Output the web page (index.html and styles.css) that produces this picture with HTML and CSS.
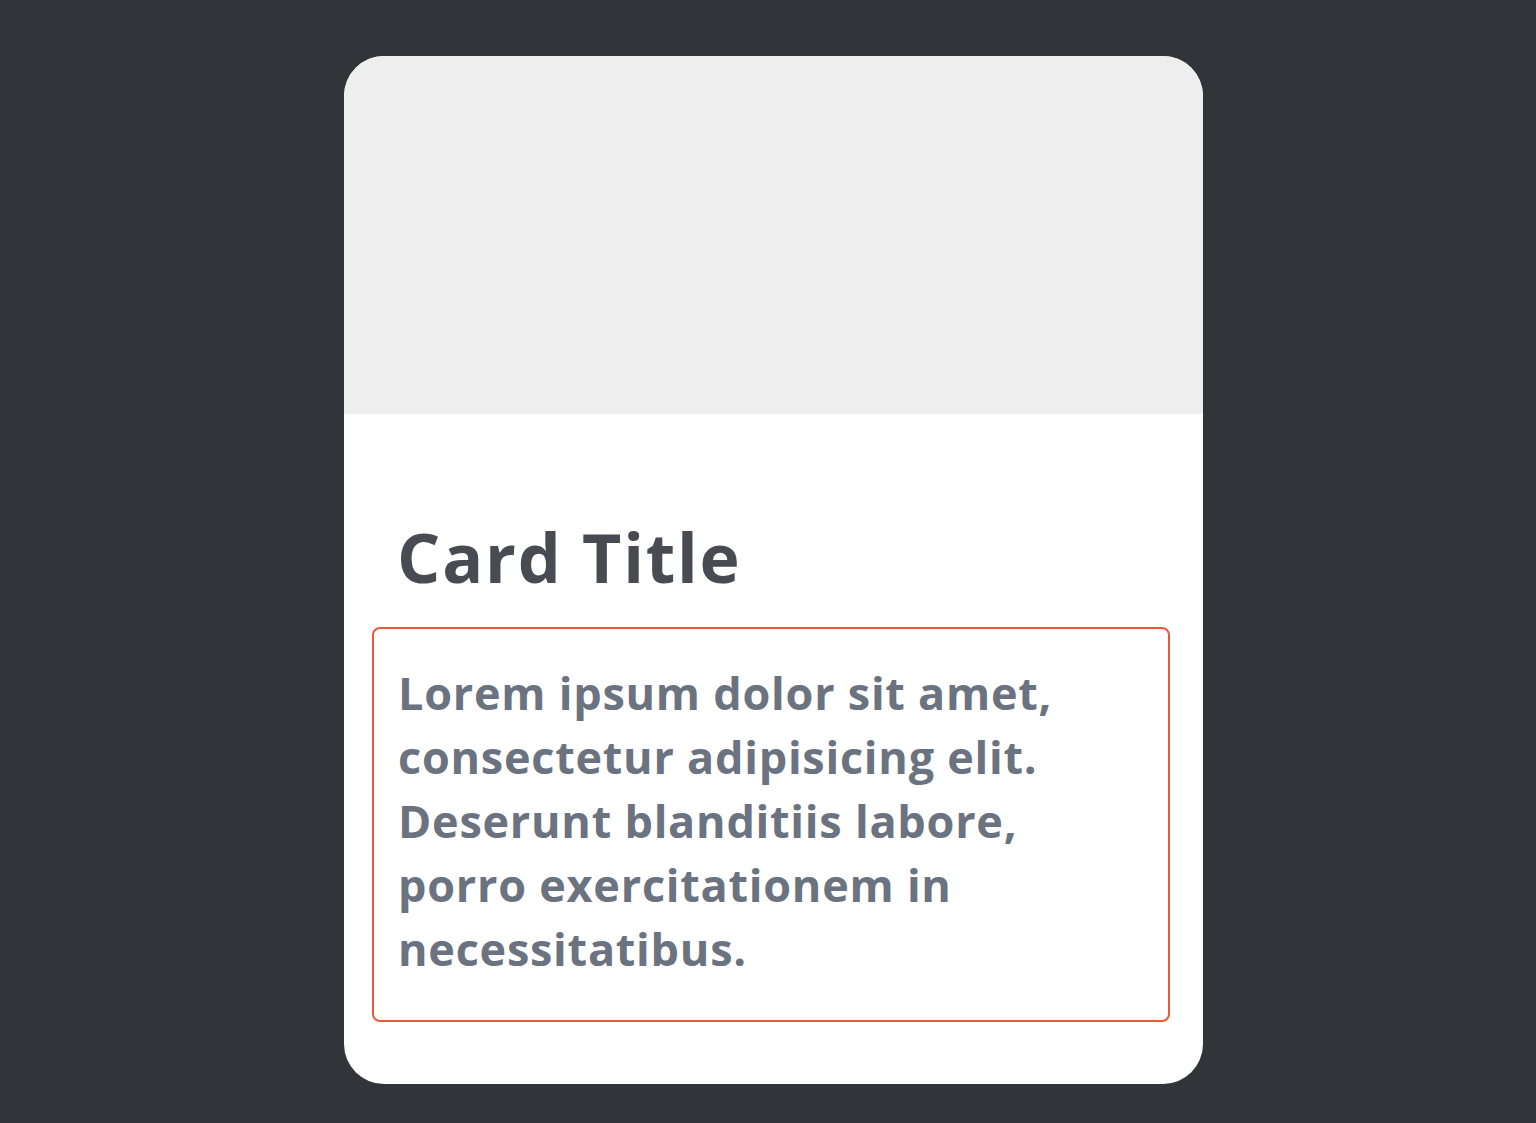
FILE: index.html
```html
<!DOCTYPE html>
<html lang="en">
<head>
<meta charset="utf-8">
<title>Card</title>
<link rel="stylesheet" href="styles.css">
</head>
<body>
  <div class="card">
    <div class="card-image"></div>
    <div class="card-body">
      <h2 class="card-title">Card Title</h2>
      <p class="card-text">Lorem ipsum dolor sit amet, consectetur adipisicing elit. Deserunt blanditiis labore, porro exercitationem in necessitatibus.</p>
    </div>
  </div>
</body>
</html>
```

FILE: styles.css
```css
html, body {
  margin: 0;
  padding: 0;
}
body {
  background: #313539;
  font-family: "Open Sans", "Noto Sans", sans-serif;
  min-height: 1123px;
  padding-top: 56px;
  box-sizing: border-box;
}
.card {
  width: 859px;
  margin-left: 344px;
  background: #ffffff;
  border-radius: 40px;
  overflow: hidden;
}
.card-image {
  height: 358px;
  background: #eeeeee;
}
.card-body {
  padding: 103px 33px 62px 28px;
}
.card-title {
  margin: 0 0 30px 25px;
  font-size: 68px;
  line-height: 80px;
  font-weight: 700;
  letter-spacing: 1.8px;
  color: #484b51;
}
.card-text {
  margin: 0;
  padding: 32px 26px 39px 24px;
  border: 2px solid #e8593a;
  border-radius: 8px;
  font-size: 45px;
  line-height: 64px;
  font-weight: 700;
  letter-spacing: 0.75px;
  color: #6b7280;
}
```
